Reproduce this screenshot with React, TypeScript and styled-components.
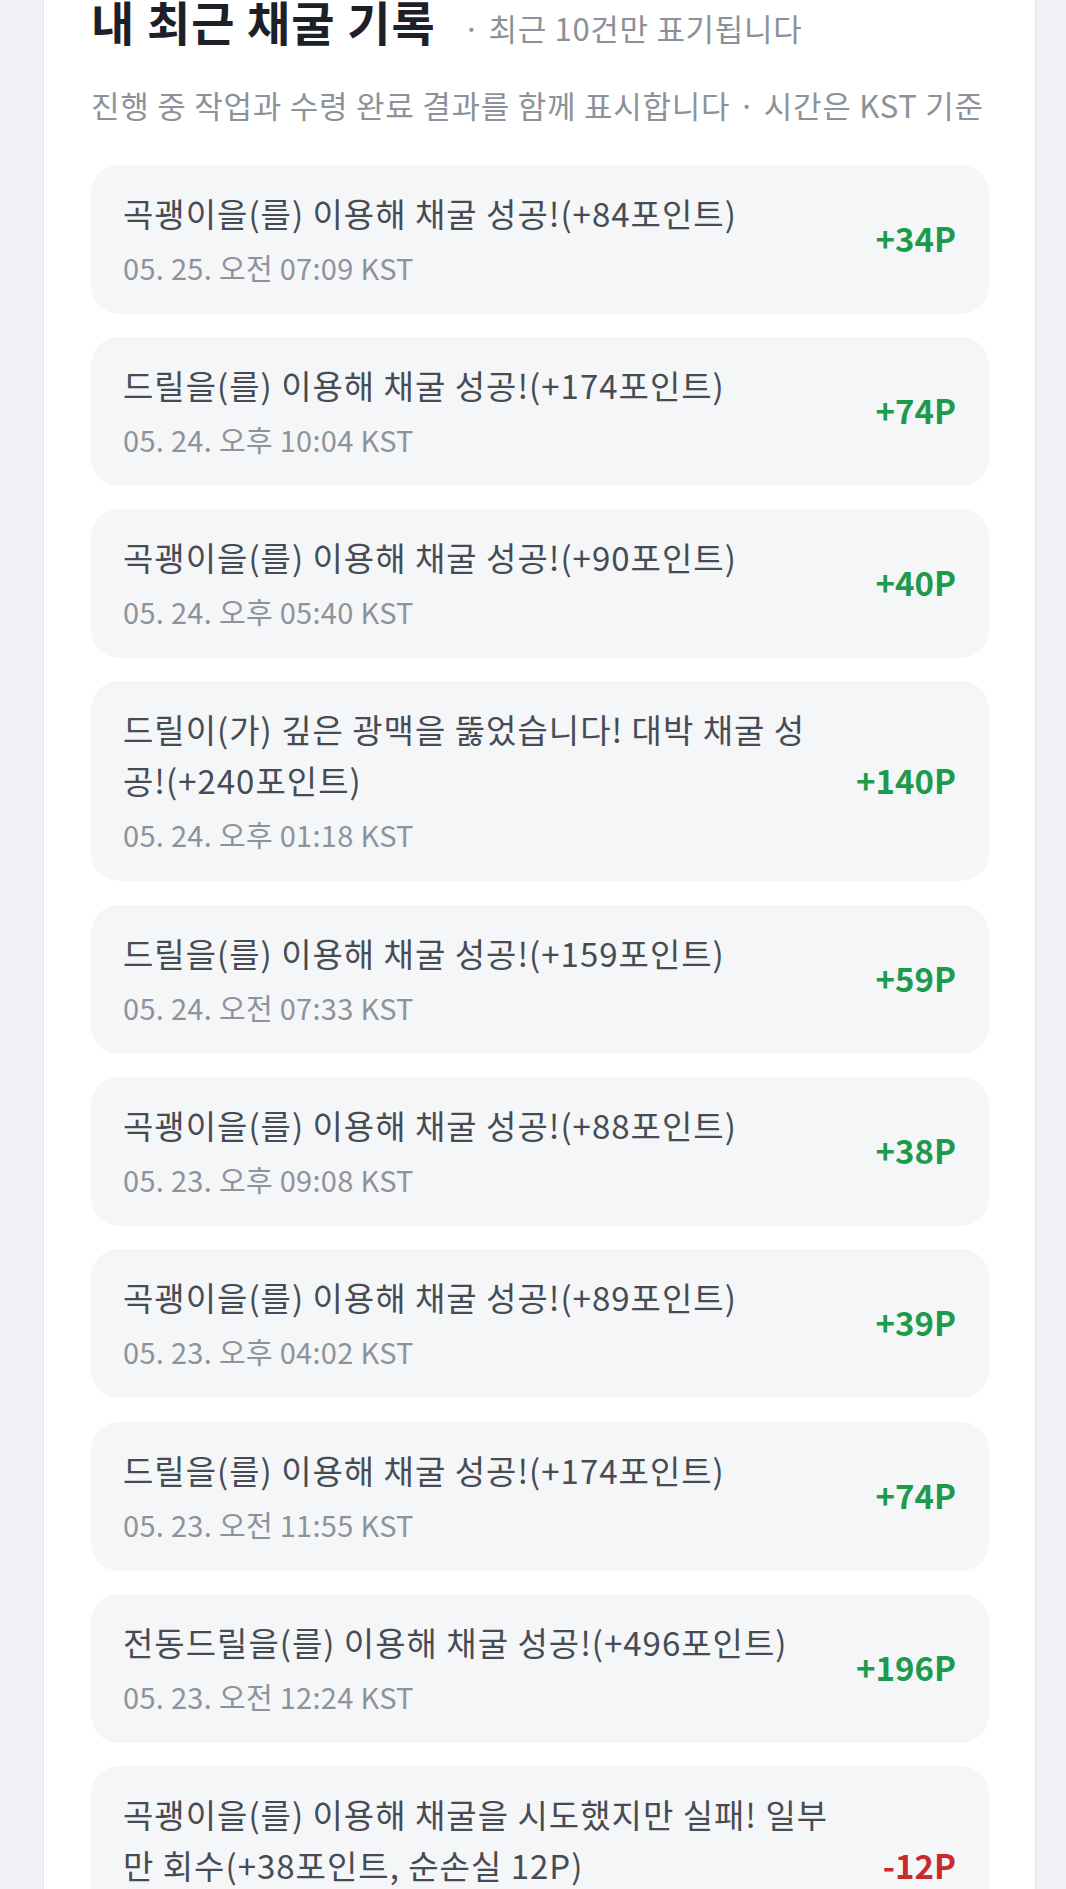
import styled, { createGlobalStyle } from "styled-components";

const GlobalStyle = createGlobalStyle`
  html, body {
    margin: 0;
    padding: 0;
    background: #eff1f4;
    font-family: "Noto Sans CJK KR", "Noto Sans", sans-serif;
    overflow: hidden;
  }
`;

const Page = styled.div`
  padding: 0 30px 0 43px;
`;

const Card = styled.section`
  background: #ffffff;
  border-left: 1px solid #f1e5cc;
  border-right: 1px solid #f1e5cc;
  padding: 0 46px 40px 47px;
`;

const Header = styled.div`
  display: flex;
  align-items: baseline;
  gap: 27px;
  margin-top: -7px;
`;

const Title = styled.h2`
  margin: 0;
  font-size: 47px;
  line-height: 55px;
  font-weight: 700;
  color: #1d2127;
  letter-spacing: 1px;
`;

const Subtitle = styled.span`
  font-size: 31px;
  color: #8c9199;
  letter-spacing: 0.7px;
`;

const Description = styled.p`
  margin: 32px 0 37.5px;
  font-size: 31px;
  line-height: 45px;
  color: #8d929a;
  letter-spacing: 0.75px;
  white-space: nowrap;
`;

const List = styled.ul`
  list-style: none;
  margin: 0;
  padding: 0;
  display: flex;
  flex-direction: column;
  gap: 23.3px;
`;

const Item = styled.li`
  display: flex;
  align-items: center;
  gap: 40px;
  padding: 23px 33px 26px 32px;
  background: #f5f6f8;
  border-radius: 28px;
`;

const Body = styled.div`
  flex: 1;
  min-width: 0;
`;

const Message = styled.div`
  font-size: 33px;
  line-height: 51px;
  color: #474c54;
  letter-spacing: 1px;
`;

const Time = styled.div`
  margin-top: 7px;
  font-size: 29px;
  line-height: 42px;
  color: #8e939b;
  letter-spacing: 0.3px;
`;

const Points = styled.span<{ $loss?: boolean }>`
  flex-shrink: 0;
  font-size: 33px;
  font-weight: 700;
  color: ${(p) => (p.$loss ? "#c92a2a" : "#1e9a4c")};
`;

const records = [
  { msg: "곡괭이을(를) 이용해 채굴 성공!(+84포인트)", time: "05. 25. 오전 07:09 KST", pts: "+34P" },
  { msg: "드릴을(를) 이용해 채굴 성공!(+174포인트)", time: "05. 24. 오후 10:04 KST", pts: "+74P" },
  { msg: "곡괭이을(를) 이용해 채굴 성공!(+90포인트)", time: "05. 24. 오후 05:40 KST", pts: "+40P" },
  {
    msg: "드릴이(가) 깊은 광맥을 뚫었습니다! 대박 채굴 성공!(+240포인트)",
    time: "05. 24. 오후 01:18 KST",
    pts: "+140P",
  },
  { msg: "드릴을(를) 이용해 채굴 성공!(+159포인트)", time: "05. 24. 오전 07:33 KST", pts: "+59P" },
  { msg: "곡괭이을(를) 이용해 채굴 성공!(+88포인트)", time: "05. 23. 오후 09:08 KST", pts: "+38P" },
  { msg: "곡괭이을(를) 이용해 채굴 성공!(+89포인트)", time: "05. 23. 오후 04:02 KST", pts: "+39P" },
  { msg: "드릴을(를) 이용해 채굴 성공!(+174포인트)", time: "05. 23. 오전 11:55 KST", pts: "+74P" },
  { msg: "전동드릴을(를) 이용해 채굴 성공!(+496포인트)", time: "05. 23. 오전 12:24 KST", pts: "+196P" },
  {
    msg: "곡괭이을(를) 이용해 채굴을 시도했지만 실패! 일부만 회수(+38포인트, 순손실 12P)",
    time: "05. 22. 오후 08:47 KST",
    pts: "-12P",
    loss: true,
  },
];

const App = (): JSX.Element => {
  return (
    <>
      <GlobalStyle />
      <Page>
        <Card>
          <Header>
            <Title>내 최근 채굴 기록</Title>
            <Subtitle>· 최근 10건만 표기됩니다</Subtitle>
          </Header>
          <Description>진행 중 작업과 수령 완료 결과를 함께 표시합니다 · 시간은 KST 기준</Description>
          <List>
            {records.map((r, i) => (
              <Item key={i}>
                <Body>
                  <Message>{r.msg}</Message>
                  <Time>{r.time}</Time>
                </Body>
                <Points $loss={r.loss}>{r.pts}</Points>
              </Item>
            ))}
          </List>
        </Card>
      </Page>
    </>
  );
};

export default App;
